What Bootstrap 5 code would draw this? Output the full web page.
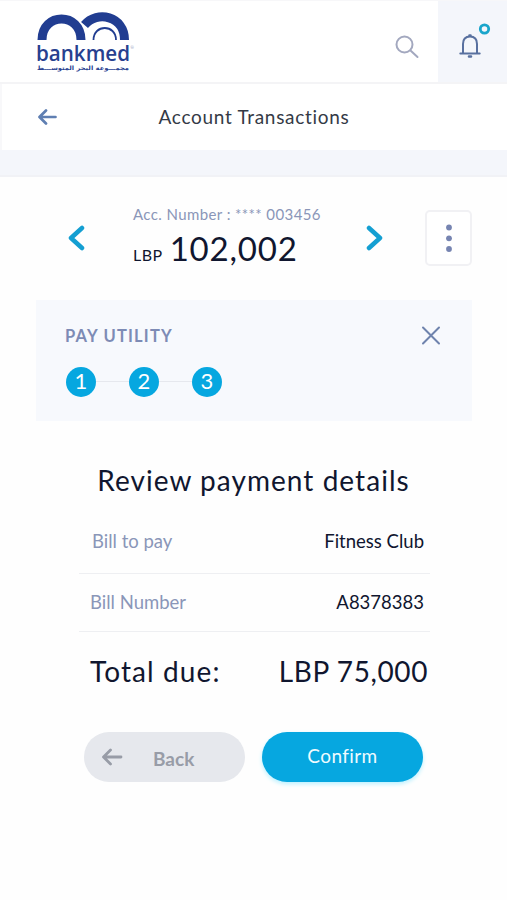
<!DOCTYPE html>
<html lang="en">
<head>
<meta charset="utf-8">
<meta name="viewport" content="width=device-width, initial-scale=1">
<title>Account Transactions</title>
<link href="https://cdn.jsdelivr.net/npm/bootstrap@5.3.0/dist/css/bootstrap.min.css" rel="stylesheet">
<style>
:root{--ink:#10162f;--muted:#8a96b8;--cyan:#06a7e0}
body{font-family:Lato,"Noto Sans",sans-serif;color:var(--ink);background:#fefefe;line-height:1;min-height:900px}
svg{display:block;flex:none}
button{line-height:1}
.top-bar{height:84px;border-top:1px solid #f7f7f9;border-bottom:2px solid #f4f4f6}
.logo{margin:8px 0 0 32px}
.search-icon{margin:34px 19px 0 0}
.bell-cell{width:69px;background:#f4f6fb;padding:22px 0 0 20px}
.sub-bar{height:66px;padding:0 37px 0 36px;border-left:2px solid #f8f8fa;display:grid;grid-template-columns:20px 1fr 20px}
.sub-bar h1{font-size:19px;letter-spacing:.7px;color:#343a46}
.band{height:27px;background:#f4f6fb;border-bottom:2px solid #f1f2f6}
.account{padding:30px 35px 0 67px;height:123px}
.chev{margin-top:18px}
.acc-info{margin-left:48px;width:233px}
.acc-no{font-size:15px;letter-spacing:.4px;color:var(--muted);line-height:18px;margin:-2px 0 5px}
.cur{font-size:16px;letter-spacing:.5px;margin-right:7px}
.sum{font-size:33px;letter-spacing:.8px;line-height:40px}
.more{width:47px;height:56px;margin-top:3px;border:2px solid #f1f1f4;border-radius:5px;background:#fff}
.steps-panel{margin:0 35px 0 36px;height:121px;background:#f7f9fd;padding:26px 31px 0 29px}
.steps-panel h2{font-size:16.5px;letter-spacing:1.2px;font-weight:700;color:#7d8bb5;padding-top:1px}
.steps-row{margin:20px 0 0 1px}
.step-dot{width:30px;height:30px;font-size:22px;background:var(--cyan);color:#fff;padding-bottom:1px}
.step-line{width:33px;height:1px;background:#e6e8ee}
.review-title{font-size:28px;letter-spacing:1.05px;margin-top:44px;line-height:30px;font-weight:400}
.bill{margin:0 77px 0 79px}
.bill-row{border-bottom:1px solid #eeeff2;font-size:18.5px;padding:19px 6px 20px 11px}
.bill-row.first{padding:37px 6px 22px 13px}
.bill-row .text-label{color:var(--muted)}
.total{font-size:28px;line-height:34px;padding:22px 2px 0 11px}
.actions{padding:44px 84px 0;gap:17px}
.pill{height:50px;border:0;border-radius:25px;width:161px;font-size:19px}
.pill-back{background:#e6e8ed;color:#989ca7;font-weight:700;padding:0 0 0 18px}
.pill-back span{margin:3px 0 0 30px}
.pill-go{background:var(--cyan);color:#effbff;box-shadow:0 2px 4px #b9f0ff;letter-spacing:.4px;padding-bottom:4px}
</style>
</head>
<body>
<header class="top-bar d-flex bg-white">
  <svg class="logo me-auto" width="108" height="66" viewBox="0 0 108 66" role="img" aria-label="bankmed">
    <g fill="none" stroke="#213d91">
      <path d="M10 31C10 3 49 3 49 31" stroke-width="9"/>
      <path d="M52.500 16C65 1 92.500 7 92.500 31" stroke-width="9"/>
      <path d="M61.500 31C61.500 15 84 15 84 31" stroke-width="1.800"/>
    </g>
    <text x="4" y="52" textLength="94" lengthAdjust="spacingAndGlyphs" font-family="Open Sans" font-weight="600" font-size="22" fill="#27408f">bankmed</text>
    <text x="98.500" y="40" font-family="Open Sans" font-size="4" fill="#8a96b8">®</text>
    <text x="5" y="60.500" textLength="92" lengthAdjust="spacingAndGlyphs" font-family="DejaVu Sans" font-weight="700" font-size="6" fill="#27408f">مجمـــوعة البحر المتوســـط</text>
  </svg>
  <svg class="search-icon" width="24" height="24" viewBox="0 0 24 24" fill="none" stroke="#a3a8bf" stroke-width="2" stroke-linecap="round"><circle cx="9.500" cy="9.500" r="8"/><path d="M15.500 15.500L22.500 22"/></svg>
  <div class="bell-cell">
    <svg width="34" height="40" viewBox="0 0 34 40" fill="none" stroke="#58709f" stroke-width="2" stroke-linecap="round"><path d="M5 30V21C5 16 8 13.500 12 13.500S19 16 19 21V30M2.300 30.500H21.700"/><path d="M11.500 12.500H12.500M11 33.500H13" stroke-width="2.600"/><circle cx="26.500" cy="6" r="4.200" stroke="#1aa5cb" stroke-width="2.800"/></svg>
  </div>
</header>
<nav class="sub-bar align-items-center bg-white">
  <svg width="20" height="16" viewBox="0 0 20 16" fill="none" stroke="#5f7fb2" stroke-width="2.700" stroke-linecap="round" stroke-linejoin="round"><path d="M8 1.500L1.500 8L8 14.500M2 8H17.500"/></svg>
  <h1 class="m-0 fw-normal text-center">Account Transactions</h1>
</nav>
<div class="band"></div>
<main>
  <section class="account d-flex align-items-start">
    <svg class="chev" width="18" height="26" viewBox="0 0 18 26" fill="none" stroke="#149fd2" stroke-width="4.500" stroke-linecap="round" stroke-linejoin="round"><path d="M15 3L4 13L15 23"/></svg>
    <div class="acc-info text-nowrap">
      <div class="acc-no">Acc. Number : **** 003456</div>
      <div class="d-flex align-items-baseline"><span class="cur">LBP</span><span class="sum">102,002</span></div>
    </div>
    <svg class="chev" width="18" height="26" viewBox="0 0 18 26" fill="none" stroke="#149fd2" stroke-width="4.500" stroke-linecap="round" stroke-linejoin="round"><path d="M3 3L14 13L3 23"/></svg>
    <button class="more ms-auto p-0 d-flex justify-content-center align-items-center" aria-label="More">
      <svg width="8" height="28" fill="#7684b1"><circle cx="4" cy="3.500" r="2.900"/><circle cx="4" cy="14.300" r="2.900"/><circle cx="4" cy="25" r="2.900"/></svg>
    </button>
  </section>
  <section class="steps-panel">
    <div class="d-flex justify-content-between align-items-start">
      <h2 class="m-0">PAY UTILITY</h2>
      <svg width="20" height="20" fill="none" stroke="#6f83ad" stroke-width="2" stroke-linecap="round"><path d="M2 1.500L18 17.500M18 1.500L2 17.500"/></svg>
    </div>
    <div class="steps-row d-flex align-items-center">
      <span class="step-dot rounded-circle d-flex align-items-center justify-content-center">1</span><span class="step-line"></span>
      <span class="step-dot rounded-circle d-flex align-items-center justify-content-center">2</span><span class="step-line"></span>
      <span class="step-dot rounded-circle d-flex align-items-center justify-content-center">3</span>
    </div>
  </section>
  <h2 class="review-title text-center mb-0">Review payment details</h2>
  <section class="bill">
    <div class="bill-row first d-flex justify-content-between"><span class="text-label">Bill to pay</span><span>Fitness Club</span></div>
    <div class="bill-row d-flex justify-content-between"><span class="text-label">Bill Number</span><span>A8378383</span></div>
    <div class="total d-flex justify-content-between"><span style="letter-spacing:1.1px">Total due:</span><span style="letter-spacing:.6px">LBP 75,000</span></div>
  </section>
  <div class="actions d-flex">
    <button class="pill pill-back d-flex align-items-center"><svg width="21" height="18" viewBox="0 0 21 18" fill="none" stroke="#989ca7" stroke-width="2.800" stroke-linecap="round" stroke-linejoin="round"><path d="M8.500 2L1.500 9L8.500 16M2 9H19"/></svg><span>Back</span></button>
    <button class="pill pill-go">Confirm</button>
  </div>
</main>
<script src="https://cdn.jsdelivr.net/npm/bootstrap@5.3.0/dist/js/bootstrap.bundle.min.js"></script>
</body>
</html>
